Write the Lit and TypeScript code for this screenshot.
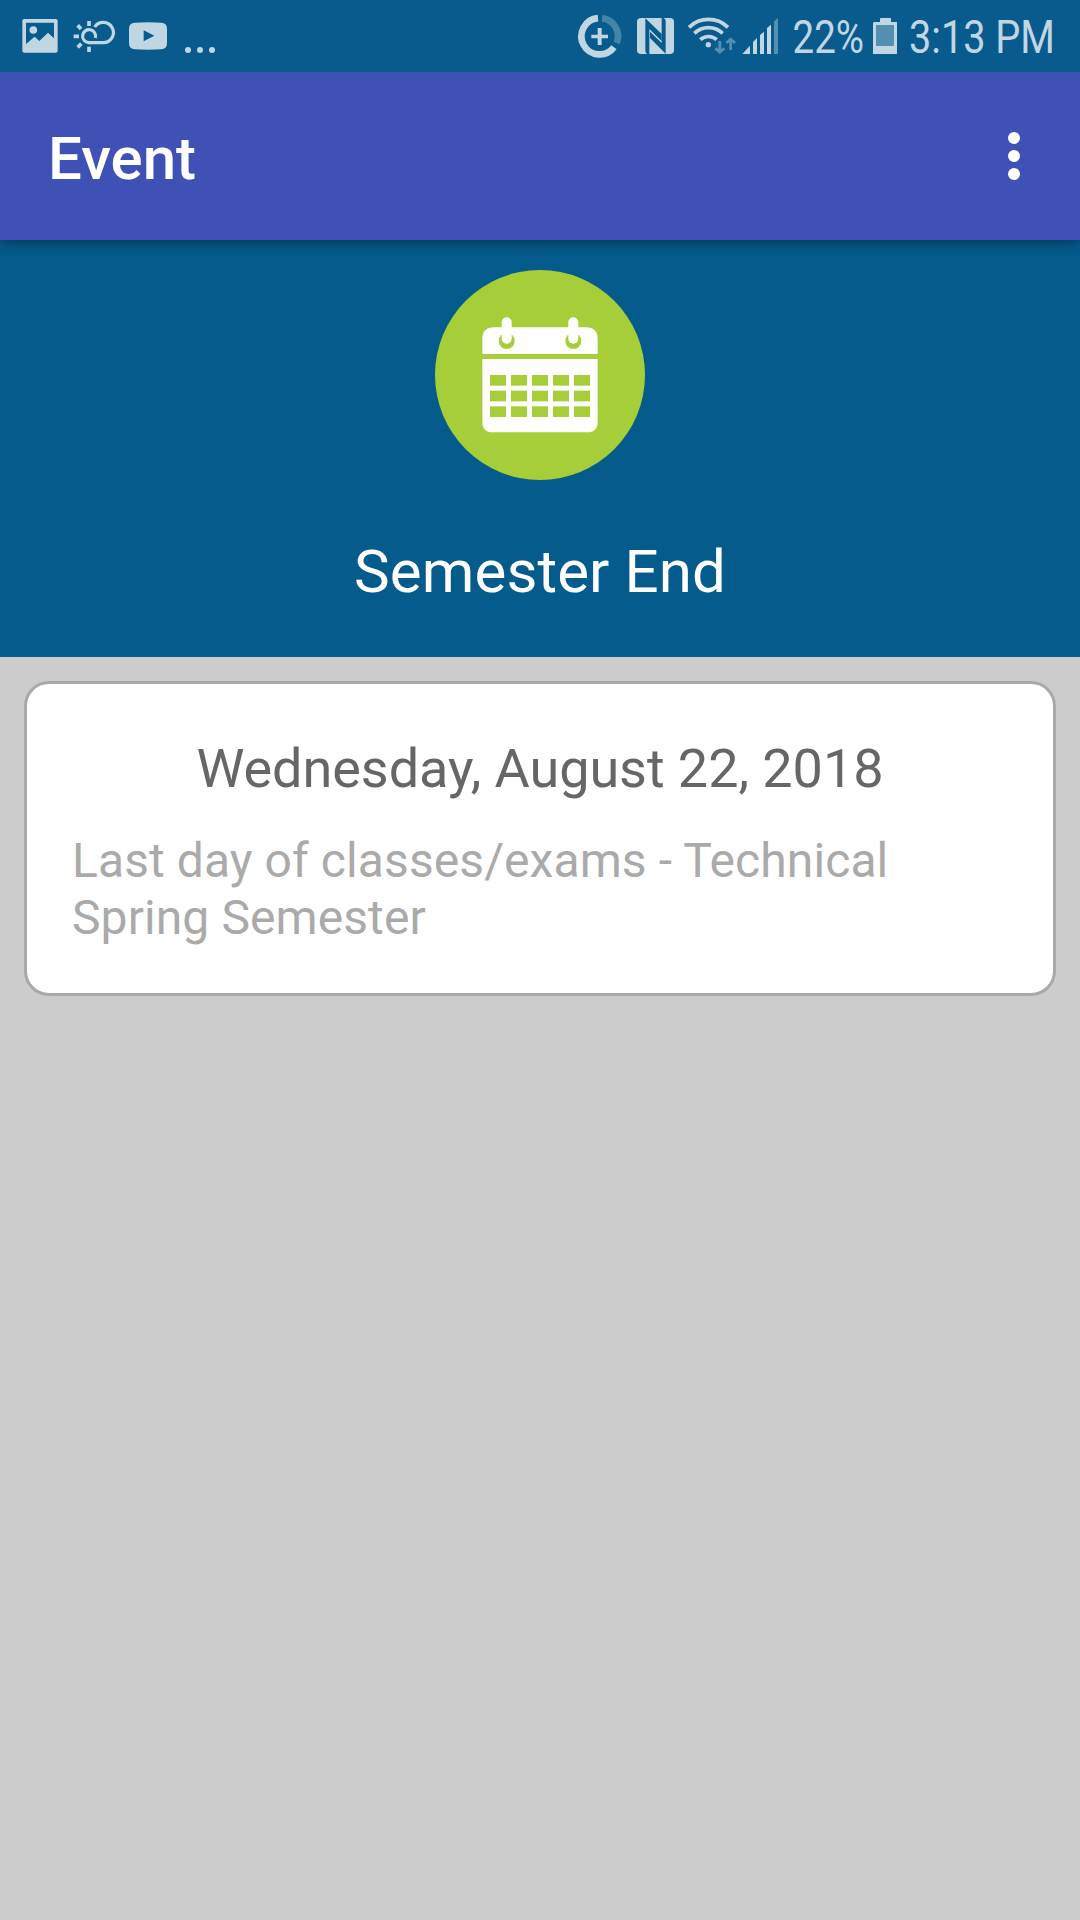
import { LitElement, html, css, svg } from "lit";
import { customElement } from "lit/decorators.js";

const columns = [210, 273, 336, 399, 462];
const rows = [360, 407, 454];

@customElement("app-root")
export class AppRoot extends LitElement {
  static styles = css`
    :host {
      display: flex;
      flex-direction: column;
      width: 1080px;
      height: 1920px;
      overflow: hidden;
      background: #cccccc;
      font-family: Roboto, "Liberation Sans", sans-serif;
    }
    svg { display: block; flex: none; overflow: visible; }
    .status {
      display: flex;
      justify-content: space-between;
      height: 72px;
      flex: none;
      padding: 0 9px 0 22px;
      background: #085b8c;
      fill: #c1d6e3;
      color: #c1d6e3;
      z-index: 2;
    }
    .group { display: flex; }
    .notices { gap: 14px; }
    .line { fill: none; stroke: #c1d6e3; }
    .faint { fill: #528fb1; }
    .faint-line { fill: none; stroke: #4584a9; }
    .cut { fill: #085b8c; }
    .status-text { font-size: 45.5px; }
    .bar {
      display: flex;
      align-items: center;
      justify-content: space-between;
      height: 168px;
      flex: none;
      box-sizing: border-box;
      padding: 0 60px 0 48px;
      background: #3f51b5;
      color: #ffffff;
      box-shadow: 0 3px 12px rgba(0, 0, 0, 0.38);
      z-index: 1;
    }
    .title { margin: 0; font-size: 60px; font-weight: 500; line-height: 71px; padding-top: 5px; }
    .menu { display: flex; flex-direction: column; gap: 6px; }
    .dot { width: 12px; height: 12px; border-radius: 50%; background: #ffffff; }
    .hero {
      display: flex;
      flex-direction: column;
      align-items: center;
      height: 417px;
      box-sizing: border-box;
      flex: none;
      padding-top: 30px;
      background: #055b8c;
      color: #ffffff;
    }
    .name { margin: 56px 0 0; font-size: 60px; font-weight: 400; line-height: 71px; letter-spacing: 0.1px; }
    .card {
      margin: 24px;
      height: 315px;
      box-sizing: border-box;
      padding: 53px 45px 0;
      border: 3px solid #a9a9a9;
      border-radius: 25px;
      background: #ffffff;
    }
    .date { margin: 0; text-align: center; font-size: 54px; line-height: 64px; letter-spacing: -0.06px; color: #666666; }
    .about { margin: 31px 0 0; font-size: 48px; line-height: 57px; letter-spacing: 0.09px; color: #aaaaaa; }
  `;

  private calendar() {
    return svg`
      <circle cx="360" cy="360" r="315" fill="#a6ce39"></circle>
      <path fill="#fff" d="M187 297V252Q187 217 222 217H498Q533 217 533 252V297Z"></path>
      <path fill="#fff" d="M187 312H533V500Q533 532 501 532H219Q187 532 187 500Z"></path>
      ${[260, 460].map((x) => svg`
        <circle cx="${x}" cy="258" r="24" fill="#a6ce39"></circle>
        <rect x="${x - 24}" y="219" width="48" height="20" fill="#fff"></rect>
        <rect x="${x - 15}" y="187" width="30" height="79" rx="15" fill="#fff"></rect>`)}
      ${rows.map((y) => columns.map((x) => svg`
        <rect x="${x}" y="${y}" width="48" height="32" fill="#a6ce39"></rect>`))}`;
  }

  render() {
    return html`
      <header class="status">
        <div class="group notices">
          <svg width="37" height="72" viewBox="66 0 111 216">
            <path fill-rule="evenodd" d="M73 57H167Q173 57 173 63V152Q173 158 167 158H73Q67 158 67 152V63Q67 57 73 57ZM78 68V132L104 110L118 123L144 98L162 115V68Z"></path>
            <circle cx="100" cy="90" r="11.5"></circle>
          </svg>
          <svg width="42" height="72" viewBox="219 0 126 216">
            <path class="line" stroke-width="9.5" d="M286 114A19.5 19.5 0 1 0 266 128H309A30.5 30.5 0 1 0 284 81"></path>
            <path class="line" stroke-width="11" d="M267 63V78M267 140V156M221 109H237M233 76L243 87M233 142L244 131"></path>
          </svg>
          <svg width="39" height="72" viewBox="387 0 117 216">
            <path fill-rule="evenodd" d="M404 68Q444 65 484 68Q501 69 501 86V130Q501 147 484 148Q444 150 404 148Q387 147 387 130V86Q387 69 404 68ZM431 91V124L463 107Z"></path>
          </svg>
          <svg width="35" height="72" viewBox="546 0 105 216">
            <circle cx="564" cy="150" r="9"></circle>
            <circle cx="600" cy="150" r="9"></circle>
            <circle cx="636" cy="150" r="9"></circle>
          </svg>
        </div>
        <div class="group">
          <svg width="212" height="72" viewBox="51 0 636 216">
            <path class="line" stroke-width="20" d="M114 54.5A54.5 54.5 0 1 0 162 142"></path>
            <path class="faint-line" stroke-width="20" d="M126 54.5A54.5 54.5 0 0 1 170 129"></path>
            <path d="M94 104H113V84H125V104H144V115H125V135H113V115H94Z"></path>
            <rect x="231" y="54" width="111" height="108" rx="12"></rect>
            <path class="cut" d="M256 55L305 102V123L268 87V162H262Q256 160 256 152Z"></path>
            <path class="cut" d="M317 161L270 114V95L305 129V54H311Q317 56 317 64Z"></path>
            <path class="line" stroke-width="11" d="M387 82A84 84 0 0 1 504 82M403 100A61 61 0 0 1 488 100M421 119A36 36 0 0 1 470 119"></path>
            <circle cx="445" cy="134" r="8"></circle>
            <path class="faint" d="M475 123H484V147L490 142L496 148L479 162L463 148L469 142L475 147ZM508 150V127L502 132L496 126L512 112L528 126L522 132L516 127V150Z"></path>
            <path d="M547 162L570 137V162ZM579 126L591 114V162H579ZM600 105L612 95V162H600ZM621 84L633 74V162H621Z"></path>
            <path class="faint" d="M642 64L654 54V162H642Z"></path>
          </svg>
          <svg width="282" height="72" viewBox="9 0 282 72">
            <text class="status-text" x="12.5" y="53" textLength="71.5" lengthAdjust="spacingAndGlyphs">22%</text>
            <path d="M94 22H100V19Q100 18 101 18H110Q111 18 111 19V22H117V54H93V23Z"></path>
            <rect class="faint" x="96" y="25" width="18" height="21"></rect>
            <text class="status-text" x="129" y="53" textLength="146" lengthAdjust="spacingAndGlyphs">3:13 PM</text>
          </svg>
        </div>
      </header>
      <nav class="bar">
        <h1 class="title">Event</h1>
        <div class="menu"><span class="dot"></span><span class="dot"></span><span class="dot"></span></div>
      </nav>
      <section class="hero">
        <svg width="210" height="210" viewBox="45 45 630 630">${this.calendar()}</svg>
        <h2 class="name">Semester End</h2>
      </section>
      <article class="card">
        <p class="date">Wednesday, August 22, 2018</p>
        <p class="about">Last day of classes/exams - Technical Spring Semester</p>
      </article>`;
  }
}
